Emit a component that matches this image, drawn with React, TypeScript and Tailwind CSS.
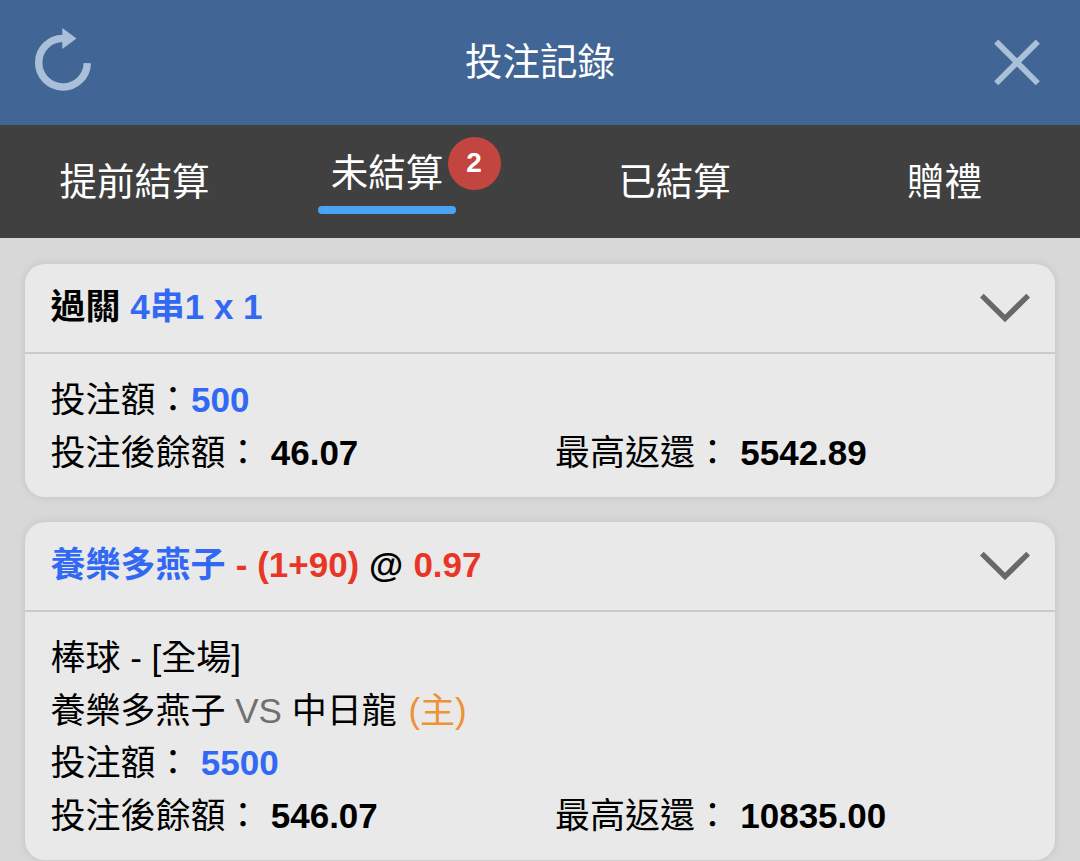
import type { ReactNode } from "react";

function Chevron() {
  return (
    <svg className="h-[30px] w-[50px] shrink-0" viewBox="0 0 50 30" fill="none" stroke="#686868" strokeWidth="5.4">
      <path d="M1.8 2.6 25 25.4 48.2 2.6" />
    </svg>
  );
}

function Tab({ label }: { label: string }) {
  return (
    <div className="flex justify-center pt-[28.5px] pr-px">
      <span className="leading-[56px]">{label}</span>
    </div>
  );
}

function Card({ title, children }: { title: ReactNode; children: ReactNode }) {
  return (
    <section className="rounded-[20px] bg-[#e9e9e9] pb-[17.6px] shadow-[0_0_8px_rgba(0,0,0,0.10)]">
      <header className="flex h-[90px] items-center justify-between border-b-2 border-[#cbcbcb] pr-[25px] pb-px pl-[25.5px] font-bold">
        <h2>{title}</h2>
        <Chevron />
      </header>
      <div className="pt-5 pr-[26px] pl-[25.5px] leading-[52.7px]">{children}</div>
    </section>
  );
}

function Totals({ balance, payout }: { balance: string; payout: string }) {
  return (
    <div className="flex">
      <p className="w-[504.5px]">
        投注後餘額： <b className="ml-[0.5px]">{balance}</b>
      </p>
      <p>
        最高返還： <b className="ml-[0.5px]">{payout}</b>
      </p>
    </div>
  );
}

export default function App() {
  return (
    <div className="h-[861px] w-[1080px] overflow-hidden bg-[#d8d8d8] font-['Liberation_Sans','Noto_Sans_CJK_TC',sans-serif] text-[35px] leading-[52.5px] whitespace-nowrap text-black">
      <header className="flex h-[125px] items-center justify-between bg-[#416594] pr-[40.5px] pl-[34px] text-[37.5px] text-white">
        <svg className="mb-[6px] h-[64px] w-[58px]" viewBox="0 0 58 64" fill="none">
          <path d="M29 10.4A24.3 24.3 0 1 0 53.3 35.2" stroke="#aac0d8" strokeWidth="7.4" />
          <path d="M28.3 0v21L42.5 10.6z" fill="#aac0d8" />
        </svg>
        <h1 className="pr-[5.5px]">投注記錄</h1>
        <svg className="h-[46px] w-[46px]" viewBox="0 0 46 46" fill="none" stroke="#aac0d8" strokeWidth="5.8">
          <path d="m2.2 1.6 41.6 41.6M43.8 1.6 2.2 43.2" />
        </svg>
      </header>
      <nav className="grid h-[113px] grid-cols-4 bg-[#404040] text-[37.5px] text-white">
        <Tab label="提前結算" />
        <div className="flex justify-center pt-[20px] pr-[36px]">
          <div className="relative flex h-[69px] w-[138px] flex-col items-center justify-between">
            <span className="leading-[56px]">未結算</span>
            <span className="h-[8px] w-full rounded-full bg-[#4ba4f3]" />
            <span className="absolute -top-[8px] left-[129.5px] flex size-[53px] items-center justify-center rounded-full bg-[#c24540] text-[28px] font-bold">
              2
            </span>
          </div>
        </div>
        <Tab label="已結算" />
        <Tab label="贈禮" />
      </nav>
      <main className="flex flex-col gap-[25px] px-[25px] pt-[26px]">
        <Card
          title={
            <>
              過關 <span className="text-[#3168f4]">4串1 x 1</span>
            </>
          }
        >
          <p>
            投注額：<b className="ml-[0.5px] text-[#3168f4]">500</b>
          </p>
          <Totals balance="46.07" payout="5542.89" />
        </Card>
        <Card
          title={
            <>
              <span className="text-[#3168f4]">養樂多燕子</span>{" "}
              <span className="ml-[0.5px] text-[#e93526]">- (1+90)</span> @{" "}
              <span className="ml-[0.5px] text-[#e93526]">0.97</span>
            </>
          }
        >
          <p>棒球 - [全場]</p>
          <p>
            養樂多燕子 <span className="text-[#707070]">VS</span> 中日龍{" "}
            <span className="ml-[2px] text-[#ef9135]">(主)</span>
          </p>
          <p>
            投注額： <b className="ml-[0.5px] text-[#3168f4]">5500</b>
          </p>
          <Totals balance="546.07" payout="10835.00" />
        </Card>
      </main>
    </div>
  );
}
